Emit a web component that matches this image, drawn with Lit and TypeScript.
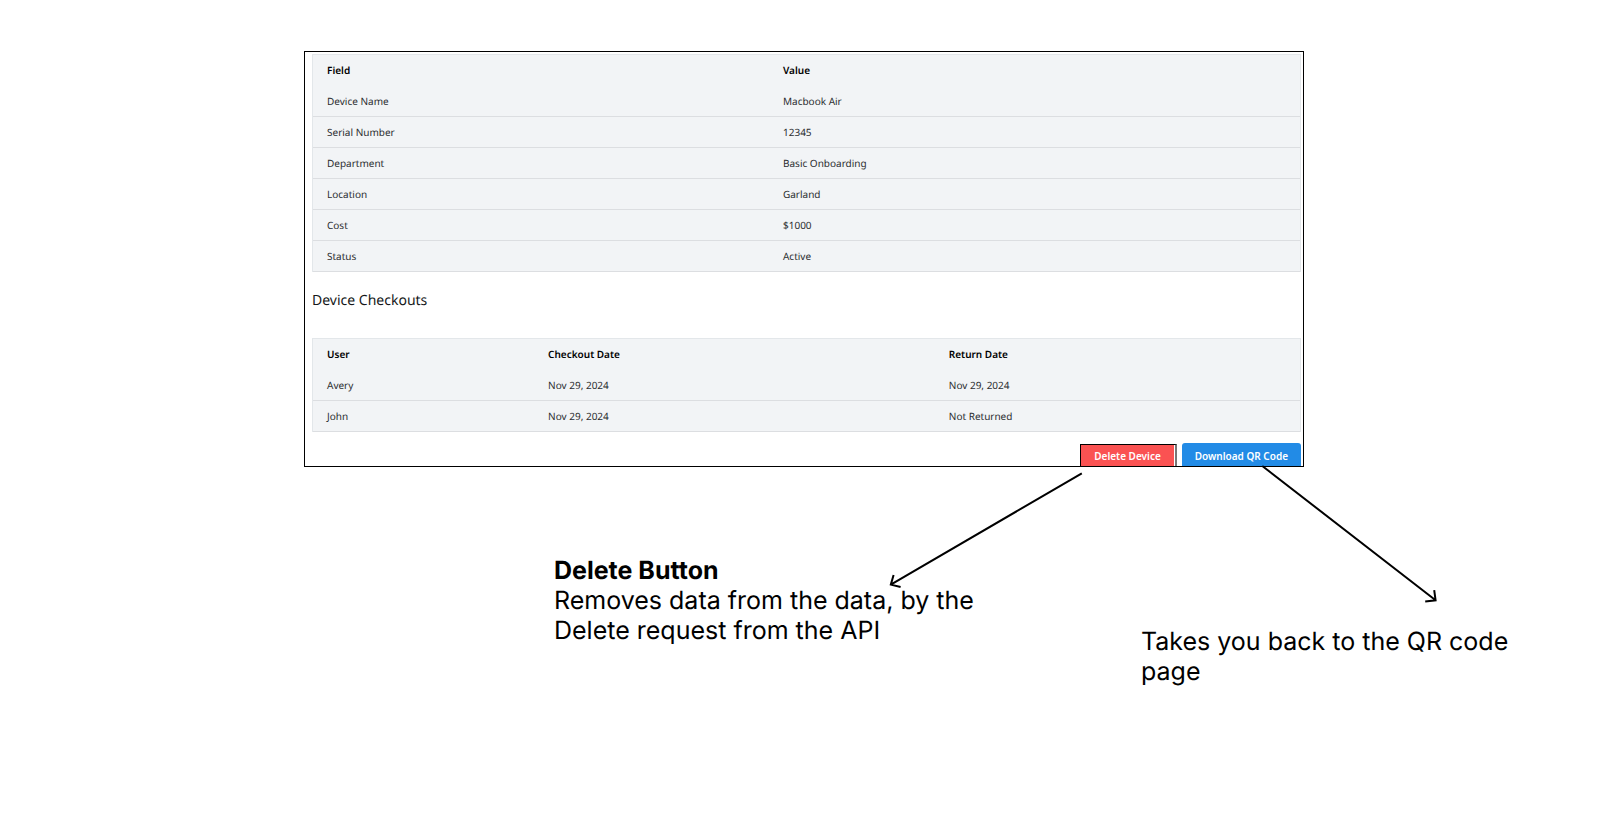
import { LitElement, html, css } from "lit";
import { customElement, property } from "lit/decorators.js";

@customElement("data-table")
class DataTable extends LitElement {
  @property({ attribute: false }) columns: string[] = [];
  @property({ attribute: false }) widths: number[] = [];
  @property({ attribute: false }) rows: string[][] = [];

  static styles = css`
    :host {
      display: block;
    }
    .table {
      width: 100%;
      table-layout: fixed;
      border-collapse: separate;
      border-spacing: 0;
      background: #f2f4f6;
      border: 1px solid #e3e7ea;
      border-bottom: 0;
      color: #2b2d30;
    }
    .head,
    .cell {
      box-sizing: border-box;
      height: 31px;
      padding: 0 14px 1px;
      font-size: 10px;
      line-height: 14px;
      text-align: left;
      vertical-align: middle;
    }
    .head {
      font-weight: 600;
      color: #000;
    }
    .cell {
      border-bottom: 1px solid #dcdee1;
    }
  `;

  render() {
    return html`
      <table class="table">
        <colgroup>
          ${this.widths.map((w) => html`<col style="width:${w}%" />`)}
        </colgroup>
        <thead>
          <tr>
            ${this.columns.map((c) => html`<th class="head" scope="col">${c}</th>`)}
          </tr>
        </thead>
        <tbody>
          ${this.rows.map(
            (r) => html`<tr>${r.map((v) => html`<td class="cell">${v}</td>`)}</tr>`
          )}
        </tbody>
      </table>
    `;
  }
}

@customElement("app-root")
class AppRoot extends LitElement {
  static styles = css`
    :host {
      display: block;
      min-height: 100vh;
      box-sizing: border-box;
      padding-top: 51px;
      background: #fff;
      color: #000;
      font-family: "Noto Sans", "Open Sans", sans-serif;
      text-rendering: geometricPrecision;
    }
    .stage {
      display: grid;
      grid-template-columns: 304fr 1000fr 303fr;
    }
    .panel {
      grid-column: 2;
      border: 1px solid #000;
      padding: 2px 2px 0 7px;
    }
    .title {
      margin: 19px 0 27px;
      font-size: 14px;
      line-height: 20px;
      font-weight: 400;
      color: #16181a;
    }
    .actions {
      display: flex;
      justify-content: flex-end;
      gap: 5px;
      margin-top: 11px;
    }
    .marker {
      display: flex;
      margin-top: 1px;
      padding-right: 1px;
      border-top: 1px solid #000;
      border-left: 1px solid #000;
      border-right: 2px solid #777;
    }
    .button {
      height: 23px;
      padding: 2px 13px 0;
      border: 0;
      border-radius: 3px 3px 0 0;
      font: 600 10px/20px "Noto Sans", "Open Sans", sans-serif;
      color: #fff;
      white-space: nowrap;
    }
    .delete {
      height: 21px;
      padding-top: 0;
      border-radius: 0;
      background: #fa5252;
    }
    .download {
      background: #228be6;
    }
    .notes {
      position: relative;
      display: grid;
      grid-template-columns: 554fr 587fr 466fr;
      padding-top: 89px;
      font: 400 25px/30px Inter, sans-serif;
      font-variant-ligatures: none;
    }
    .note {
      margin: 0;
    }
    .note-delete {
      grid-column: 2;
      max-width: 440px;
    }
    .note-download {
      grid-column: 3;
      max-width: 380px;
      margin-top: 71px;
    }
    .lead {
      display: block;
      font-weight: 700;
    }
    .arrows {
      position: absolute;
      top: 0;
      left: 0;
      width: 100%;
      height: 140px;
      overflow: visible;
      fill: none;
      stroke: #000;
      stroke-width: 2;
    }
    .arrows path {
      vector-effect: non-scaling-stroke;
    }
  `;

  private details = [
    ["Device Name", "Macbook Air"],
    ["Serial Number", "12345"],
    ["Department", "Basic Onboarding"],
    ["Location", "Garland"],
    ["Cost", "$1000"],
    ["Status", "Active"],
  ];

  private checkouts = [
    ["Avery", "Nov 29, 2024", "Nov 29, 2024"],
    ["John", "Nov 29, 2024", "Not Returned"],
  ];

  render() {
    return html`
      <main>
        <div class="stage">
          <section class="panel">
            <data-table
              .columns=${["Field", "Value"]}
              .widths=${[46.2, 53.8]}
              .rows=${this.details}
            ></data-table>
            <h2 class="title">Device Checkouts</h2>
            <data-table
              .columns=${["User", "Checkout Date", "Return Date"]}
              .widths=${[22.4, 40.6, 37]}
              .rows=${this.checkouts}
            ></data-table>
            <div class="actions">
              <div class="marker">
                <button class="button delete" type="button">Delete Device</button>
              </div>
              <button class="button download" type="button">Download QR Code</button>
            </div>
          </section>
        </div>
        <div class="notes">
          <svg class="arrows" viewBox="0 0 1607 140" preserveAspectRatio="none" aria-hidden="true">
            <path d="M1081.8 6.3L890.8 117.6M893.6 108L890.8 117.6L900.6 120" />
            <path d="M1262.3 -1L1435.6 133.3M1434.2 123.2L1435.6 133.3L1425.2 134.6" />
          </svg>
          <p class="note note-delete">
            <strong class="lead">Delete Button</strong>
            Removes data from the data, by the Delete request from the API
          </p>
          <p class="note note-download">Takes you back to the QR code page</p>
        </div>
      </main>
    `;
  }
}
